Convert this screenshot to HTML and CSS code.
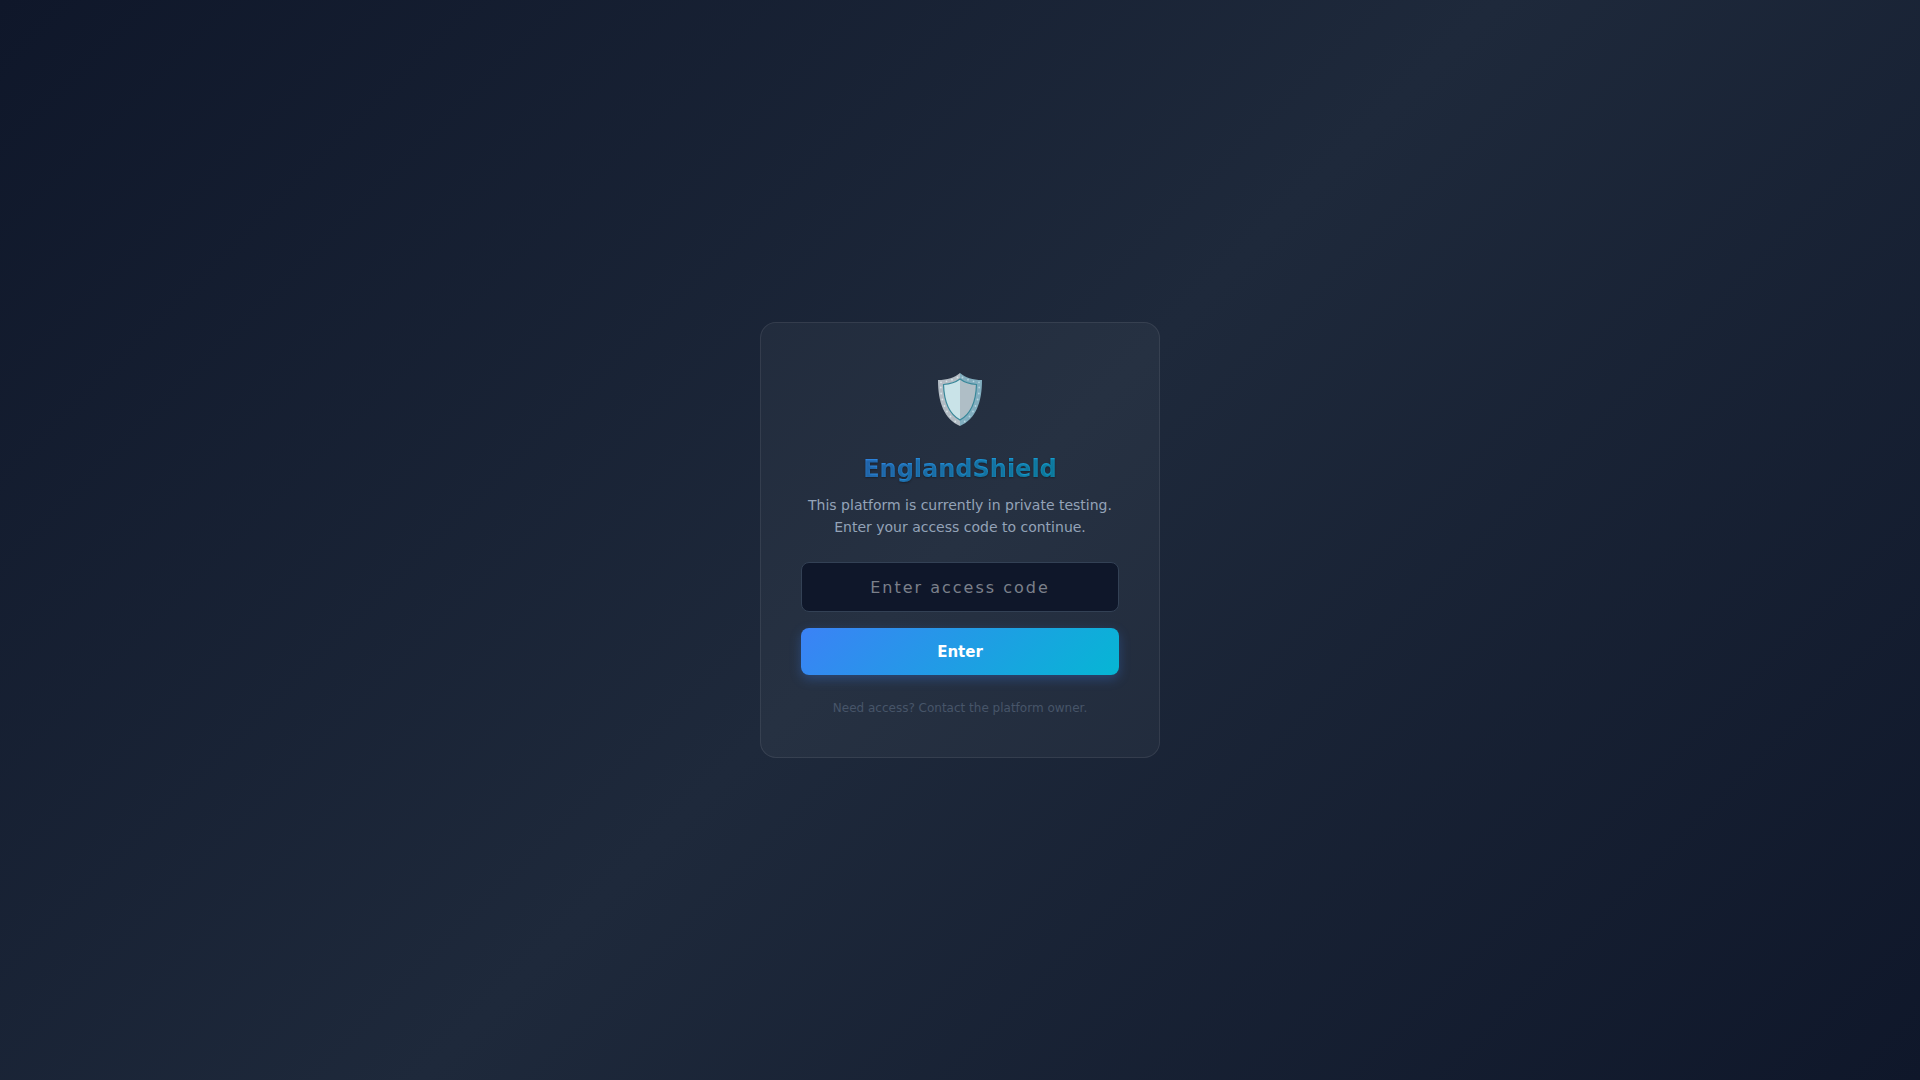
FILE: index.html
```html
<!DOCTYPE html>
<html lang="en">
<head>
<meta charset="utf-8">
<meta name="viewport" content="width=device-width, initial-scale=1">
<title>EnglandShield</title>
<link rel="stylesheet" href="styles.css">
</head>
<body>
<main class="card">
  <svg class="logo" viewBox="0 0 44 53" aria-hidden="true">
    <path fill="#b3bcc4" d="M22 0C17 4.500 9 7 0 7C0 29 6 46 22 53Z"/>
    <path fill="#82aebf" d="M22 0C27 4.500 35 7 44 7C44 29 38 46 22 53Z"/>
    <path fill="#c9e3e8" d="M22 6C18 9 12 11 5.500 11.500C6 28 11 41 22 47Z"/>
    <path fill="#afbec6" d="M22 6C26 9 32 11 38.500 11.500C38 28 33 41 22 47Z"/>
    <path fill="none" stroke="#39889a" stroke-width="1.200" d="M22 6C18 9 12 11 5.500 11.500C6 28 11 41 22 47C33 41 38 28 38.500 11.500C32 11 26 9 22 6Z"/>
    <g fill="#d9e3e7">
      <circle cx="19.500" cy="4.500" r=".9"/><circle cx="14" cy="6.700" r=".9"/><circle cx="8.500" cy="8.300" r=".9"/><circle cx="3" cy="9.300" r=".9"/><circle cx="2.800" cy="14.500" r=".9"/><circle cx="3.200" cy="20.500" r=".9"/><circle cx="4.400" cy="26.500" r=".9"/><circle cx="6.500" cy="33" r=".9"/><circle cx="9" cy="38.500" r=".9"/><circle cx="12.500" cy="43.500" r=".9"/><circle cx="17.300" cy="48.500" r=".9"/>
    </g>
    <g fill="#b4d5df">
      <circle cx="24.500" cy="4.500" r=".9"/><circle cx="30" cy="6.700" r=".9"/><circle cx="35.500" cy="8.300" r=".9"/><circle cx="41" cy="9.300" r=".9"/><circle cx="41.200" cy="14.500" r=".9"/><circle cx="40.800" cy="20.500" r=".9"/><circle cx="39.600" cy="26.500" r=".9"/><circle cx="37.500" cy="33" r=".9"/><circle cx="35" cy="38.500" r=".9"/><circle cx="31.500" cy="43.500" r=".9"/><circle cx="26.700" cy="48.500" r=".9"/>
    </g>
  </svg>
  <h1 class="title">EnglandShield</h1>
  <p class="intro">This platform is currently in private testing.<br>Enter your access code to continue.</p>
  <form class="form">
    <input class="code" type="password" placeholder="Enter access code" aria-label="Access code">
    <button class="submit" type="submit">Enter</button>
  </form>
  <p class="help">Need access? Contact the platform owner.</p>
</main>
</body>
</html>
```

FILE: styles.css
```css
* {
  box-sizing: border-box;
  margin: 0;
}

body {
  min-height: 100vh;
  display: flex;
  align-items: center;
  justify-content: center;
  background: linear-gradient(135deg, #0f172a 0%, #1e293b 50%, #0f172a 100%);
  font-family: "DejaVu Sans", sans-serif;
  color: #f1f5f9;
}

.card {
  width: 100%;
  max-width: 400px;
  padding: 50px 40px 40px;
  display: flex;
  flex-direction: column;
  align-items: center;
  text-align: center;
  background: rgba(255, 255, 255, 0.04);
  border: 1px solid rgba(255, 255, 255, 0.08);
  border-radius: 16px;
}

.logo {
  width: 44px;
  height: 53px;
  margin-bottom: 26px;
}

.title {
  width: 100%;
  margin-bottom: 8px;
  font-size: 24px;
  line-height: 34px;
  background: linear-gradient(135deg, #3b82f6, #06b6d4);
  -webkit-background-clip: text;
  background-clip: text;
  -webkit-text-fill-color: transparent;
  text-shadow: 0 1px 2px rgba(0, 0, 0, 0.3);
}

.intro {
  margin-bottom: 24px;
  font-size: 14px;
  line-height: 22px;
  color: #94a3b8;
}

.form {
  width: 100%;
  display: flex;
  flex-direction: column;
  gap: 16px;
}

.code {
  width: 100%;
  height: 50px;
  padding: 0 16px;
  font: 16px "DejaVu Sans", sans-serif;
  letter-spacing: 2px;
  text-align: center;
  color: #f1f5f9;
  background: #0f172a;
  border: 1px solid #334155;
  border-radius: 8px;
}

.code::placeholder {
  color: #7b808a;
}

.submit {
  width: 100%;
  height: 47px;
  font: bold 15px "DejaVu Sans", sans-serif;
  color: #fff;
  background: linear-gradient(135deg, #3b82f6, #06b6d4);
  border: 0;
  border-radius: 8px;
  box-shadow: 0 4px 12px rgba(59, 130, 246, 0.3);
}

.help {
  margin-top: 24px;
  font-size: 12px;
  line-height: 18px;
  color: #475569;
}
```
